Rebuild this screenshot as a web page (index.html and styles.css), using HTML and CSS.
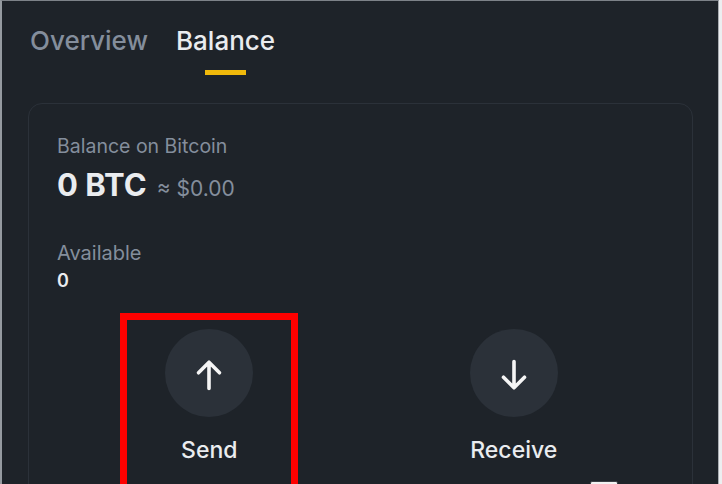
FILE: index.html
```html
<!DOCTYPE html>
<html lang="en">
<head>
    <meta charset="UTF-8">
    <meta name="viewport" content="width=device-width, initial-scale=1.0">
    <title>Bitcoin - Balance</title>
    <link rel="stylesheet" href="styles.css">
</head>
<body>
    <div class="screen">
        <nav class="tabs">
            <a href="#" class="tab">Overview<span class="indicator"></span></a>
            <a href="#" class="tab active">Balance<span class="indicator"></span></a>
        </nav>

        <section class="card">
            <p class="label">Balance on Bitcoin</p>
            <p class="amount">
                <span class="btc">0 BTC</span>
                <span class="fiat">≈ $0.00</span>
            </p>

            <p class="label available">Available</p>
            <p class="value">0</p>

            <div class="actions">
                <a href="#" class="action">
                    <span class="highlight"></span>
                    <span class="circle">
                        <svg width="36" height="36" viewBox="0 0 24 24" fill="none" stroke="currentColor" stroke-width="2.4" stroke-linecap="round" stroke-linejoin="round">
                            <path d="M12 21V3.5M5 10.5l7-7 7 7"/>
                        </svg>
                    </span>
                    <span class="action-name">Send</span>
                </a>
                <a href="#" class="action">
                    <span class="circle">
                        <svg width="36" height="36" viewBox="0 0 24 24" fill="none" stroke="currentColor" stroke-width="2.4" stroke-linecap="round" stroke-linejoin="round">
                            <path d="M12 3v17.5M5 13.5l7 7 7-7"/>
                        </svg>
                    </span>
                    <span class="action-name">Receive</span>
                </a>
            </div>
        </section>

        <span class="cursor-box"></span>
    </div>
</body>
</html>
```

FILE: styles.css
```css
/* Global styles */
:root {
    --bg-color: #1e2329;
    --line-color: #2b3139;
    --text-color: #eaecef;
    --muted-color: #848e9c;
    --accent-color: #f0b90b;
}

* {
    box-sizing: border-box;
}

body {
    margin: 0;
    background: #eceef0;
    font-family: 'Inter', 'Noto Sans', sans-serif;
    color: var(--text-color);
}

p {
    margin: 0;
}

a {
    color: inherit;
    text-decoration: none;
}

/* Screen frame */
.screen {
    position: relative;
    width: 719px;
    height: 484px;
    overflow: hidden;
    background: var(--bg-color);
    border-left: 2px solid #959aa0;
    border-top: 1px solid #7d8288;
    border-right: 1px solid #a9adb2;
}

/* Tabs */
.tabs {
    display: flex;
    gap: 28px;
    padding: 23px 0 0 28px;
}

.tab {
    display: flex;
    flex-direction: column;
    align-items: center;
    gap: 12px;
    font-size: 26px;
    line-height: 34px;
    font-weight: 500;
    color: var(--muted-color);
}

.tab.active {
    color: var(--text-color);
}

.indicator {
    width: 41px;
    height: 5px;
    background: transparent;
}

.tab.active .indicator {
    background: var(--accent-color);
}

/* Balance card */
.card {
    margin: 28px 0 0 26px;
    width: 665px;
    height: 420px;
    border: 1px solid var(--line-color);
    border-radius: 14px;
    padding: 30px 26px 0 28px;
}

.label {
    font-size: 19.5px;
    line-height: 24px;
    color: var(--muted-color);
}

.amount {
    display: flex;
    align-items: baseline;
    gap: 10px;
    margin-top: 7px;
}

.btc {
    font-size: 31px;
    line-height: 40px;
    font-weight: 700;
}

.fiat {
    font-size: 21px;
    color: var(--muted-color);
}

.available {
    margin-top: 36px;
    font-size: 20px;
}

.value {
    margin-top: 4px;
    font-size: 18px;
    line-height: 24px;
    font-weight: 600;
}

/* Send / Receive */
.actions {
    display: grid;
    grid-template-columns: 1fr 1fr;
    margin-top: 36px;
}

.action {
    position: relative;
    display: flex;
    flex-direction: column;
    align-items: center;
    gap: 18px;
}

.circle {
    display: flex;
    align-items: center;
    justify-content: center;
    width: 88px;
    height: 88px;
    border-radius: 50%;
    background: var(--line-color);
    color: #f5f5f5;
}

.circle svg {
    margin-top: 4px;
}

.action-name {
    font-size: 23px;
    line-height: 30px;
    font-weight: 500;
}

/* Red annotation box drawn over the Send button */
.highlight {
    position: absolute;
    top: -16px;
    left: calc(50% - 89px);
    width: 178px;
    height: 180px;
    border: 7px solid #ff0000;
}

.cursor-box {
    position: absolute;
    left: 588px;
    top: 480px;
    width: 28px;
    height: 12px;
    background: #f2f2f2;
    border: 1px solid #3a3f45;
    border-radius: 2px;
}
```
